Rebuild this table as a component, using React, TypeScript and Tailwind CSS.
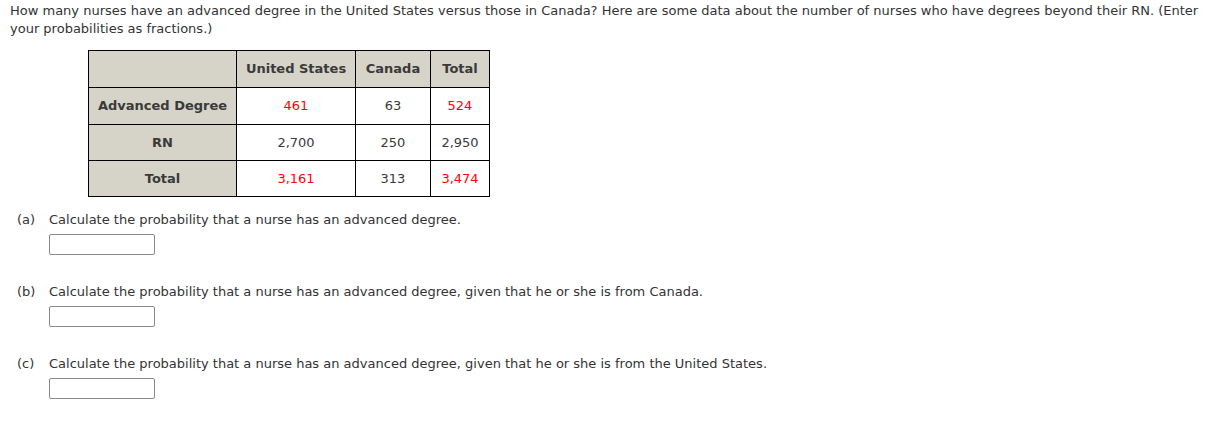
import React from 'react';

const rows = [
  { label: 'Advanced Degree', us: '461', ca: '63', total: '524', usRed: true, totalRed: true, h: 'h-[37px]' },
  { label: 'RN', us: '2,700', ca: '250', total: '2,950', usRed: false, totalRed: false, h: 'h-[36px]' },
  { label: 'Total', us: '3,161', ca: '313', total: '3,474', usRed: true, totalRed: true, h: 'h-[36px]' },
];

const parts = [
  { tag: '(a)', text: 'Calculate the probability that a nurse has an advanced degree.' },
  { tag: '(b)', text: 'Calculate the probability that a nurse has an advanced degree, given that he or she is from Canada.' },
  { tag: '(c)', text: 'Calculate the probability that a nurse has an advanced degree, given that he or she is from the United States.' },
];

export default function App() {
  return (
    <main className="w-[1220px] h-[429px] bg-white px-[10px] pt-[2px] text-[13px] leading-[18px] text-[#333] font-['Verdana','DejaVu_Sans',sans-serif]">
      <p>
        How many nurses have an advanced degree in the United States versus those in Canada? Here are some data about the number of nurses who have degrees beyond their RN. (Enter your probabilities as fractions.)
      </p>

      <table className="ml-[78px] mt-[12px] border-collapse border border-black text-[#3a3a3a]">
        <thead>
          <tr className="h-[37px]">
            <th className="w-[148px] border border-black bg-[#d6d3c8]"></th>
            <th className="w-[119px] border border-black bg-[#d6d3c8] font-bold">United States</th>
            <th className="w-[75px] border border-black bg-[#d6d3c8] font-bold">Canada</th>
            <th className="w-[59px] border border-black bg-[#d6d3c8] font-bold">Total</th>
          </tr>
        </thead>
        <tbody>
          {rows.map((r) => (
            <tr key={r.label} className={r.h}>
              <th className="border border-black bg-[#d6d3c8] font-bold">{r.label}</th>
              <td className={`border border-black text-center ${r.usRed ? 'text-[#ff0000]' : ''}`}>{r.us}</td>
              <td className="border border-black text-center">{r.ca}</td>
              <td className={`border border-black text-center ${r.totalRed ? 'text-[#ff0000]' : ''}`}>{r.total}</td>
            </tr>
          ))}
        </tbody>
      </table>

      <div className="mt-[14px] flex flex-col gap-[28px]">
        {parts.map((p) => (
          <div key={p.tag} className="flex pl-[7px]">
            <span className="w-[32px] shrink-0">{p.tag}</span>
            <div className="flex flex-col gap-[5px]">
              <span>{p.text}</span>
              <input type="text" className="h-[21px] w-[106px] rounded-[2px] border border-[#8a8a8a] bg-white" />
            </div>
          </div>
        ))}
      </div>
    </main>
  );
}
